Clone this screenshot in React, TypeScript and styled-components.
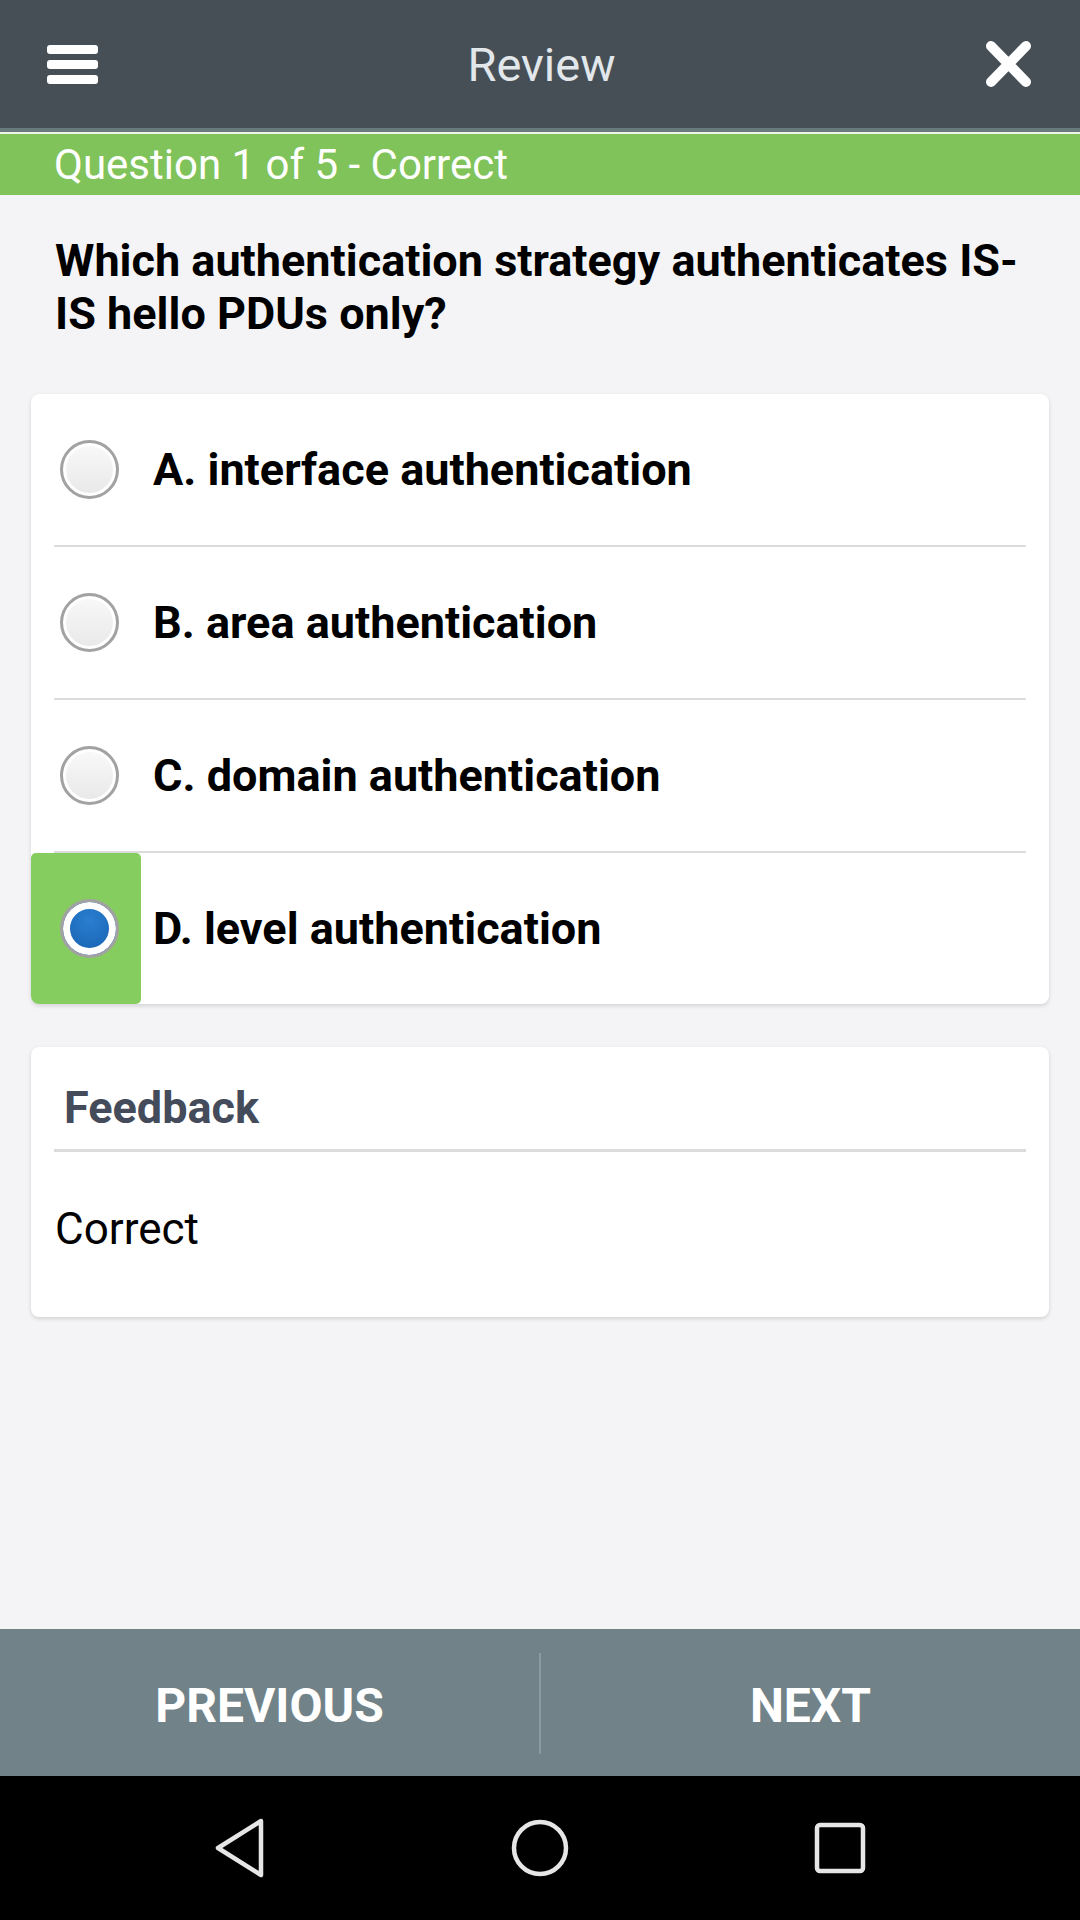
import React from "react";
import styled, { createGlobalStyle } from "styled-components";

const GlobalStyle = createGlobalStyle`
  html, body { margin: 0; padding: 0; }
  body {
    font-family: Roboto, "Noto Sans", "Liberation Sans", sans-serif;
    background: #f4f4f6;
    -webkit-font-smoothing: antialiased;
  }
  * { box-sizing: border-box; }
`;

const Page = styled.div`
  width: 1080px;
  min-height: 1920px;
  display: flex;
  flex-direction: column;
  background: #f4f4f6;
`;

const Header = styled.header`
  height: 132px;
  background: #474f56;
  border-bottom: 4px solid #677b7c;
  display: flex;
  align-items: center;
  justify-content: space-between;
  padding: 0 48px 0 47px;
`;

const Title = styled.h1`
  margin: 0;
  font-size: 47px;
  font-weight: 400;
  color: #e1e7ea;
  line-height: 1;
`;

const IconButton = styled.button`
  background: none;
  border: 0;
  padding: 0;
  display: flex;
  align-items: center;
  justify-content: center;
`;

const StatusBar = styled.div`
  height: 63px;
  background: #80c35a;
  border-top: 2px solid #eef5e8;
  display: flex;
  align-items: center;
  padding-left: 54px;
  font-size: 42px;
  font-weight: 400;
  color: #ffffff;
`;

const Content = styled.main`
  flex: 1;
  padding: 0 31px;
`;

const Question = styled.p`
  margin: 39px 24px 54px;
  font-size: 45px;
  line-height: 53px;
  font-weight: 700;
  color: #000;
`;

const Card = styled.section<{ $gap?: number }>`
  background: #fff;
  border-radius: 8px;
  box-shadow: 0 2px 4px rgba(0, 0, 0, 0.13), 0 0 1px rgba(0, 0, 0, 0.06);
  overflow: hidden;
  margin-top: ${(p) => p.$gap ?? 0}px;
`;

const OptionRow = styled.div`
  height: 151px;
  display: flex;
  align-items: stretch;
`;

const RadioCell = styled.div<{ $selected?: boolean }>`
  width: 110px;
  display: flex;
  align-items: center;
  justify-content: center;
  padding-left: 6px;
  background: ${(p) => (p.$selected ? "#86cd5f" : "transparent")};
  border-radius: 5px;
`;

const Radio = styled.span<{ $checked?: boolean }>`
  width: 59px;
  height: 59px;
  border-radius: 50%;
  border: 3px solid #a2a2a2;
  background: ${(p) =>
    p.$checked
      ? "radial-gradient(circle at 50% 35%, #2a7fd0 0%, #1a66b6 70%)"
      : "linear-gradient(#f9f9f9, #e8e8e8)"};
  box-shadow: inset 0 0 0 ${(p) => (p.$checked ? 7 : 3)}px #ffffff;
`;

const OptionText = styled.span`
  display: flex;
  align-items: center;
  margin-left: 12px;
  font-size: 45px;
  font-weight: 700;
  color: #000;
`;

const Separator = styled.div<{ $thick?: number }>`
  height: ${(p) => p.$thick ?? 2}px;
  margin: 0 23px;
  background: #dcdcdc;
`;

const FeedbackTitle = styled.h2`
  margin: 0;
  padding: 35px 0 15px 33px;
  font-size: 45px;
  line-height: 52px;
  font-weight: 700;
  color: #444b5b;
`;

const FeedbackBody = styled.p`
  margin: 0;
  padding: 51px 24px 62px;
  font-size: 44px;
  line-height: 52px;
  font-weight: 400;
  color: #000;
`;

const BottomBar = styled.nav`
  height: 147px;
  background: #718389;
  display: flex;
  align-items: stretch;
`;

const NavButton = styled.button`
  flex: 1;
  background: none;
  border: 0;
  padding: 6px 0 0;
  color: #fff;
  font-family: Roboto, "Liberation Sans", sans-serif;
  font-size: 48px;
  font-weight: 700;
  display: flex;
  align-items: center;
  justify-content: center;
`;

const VDivider = styled.div`
  width: 2px;
  margin: 24px 0 22px;
  background: #8a9ca1;
`;

const SystemNav = styled.div`
  height: 144px;
  background: #000;
  display: grid;
  grid-template-columns: repeat(3, 300px);
  justify-content: center;
  align-items: center;
  justify-items: center;
`;

const options = [
  "A. interface authentication",
  "B. area authentication",
  "C. domain authentication",
  "D. level authentication",
];
const selected = 3;

const MenuIcon = () => (
  <svg width="51" height="39" viewBox="0 0 51 39">
    <rect x="0" y="0" width="51" height="9" rx="3" fill="#fff" />
    <rect x="0" y="15" width="51" height="9" rx="3" fill="#fff" />
    <rect x="0" y="30" width="51" height="9" rx="3" fill="#fff" />
  </svg>
);

const CloseIcon = () => (
  <svg width="47" height="48" viewBox="0 0 47 48">
    <path d="M6 6 L41 42 M41 6 L6 42" stroke="#fff" strokeWidth="10" strokeLinecap="round" />
  </svg>
);

const NavIcon = "#e6e6e6";

export default function App() {
  return (
    <>
      <GlobalStyle />
      <Page>
        <Header>
          <IconButton aria-label="menu">
            <MenuIcon />
          </IconButton>
          <Title>Review</Title>
          <IconButton aria-label="close">
            <CloseIcon />
          </IconButton>
        </Header>
        <StatusBar>Question 1 of 5 - Correct</StatusBar>
        <Content>
          <Question>Which authentication strategy authenticates IS-IS hello PDUs only?</Question>
          <Card>
            {options.map((o, i) => (
              <React.Fragment key={o}>
                {i > 0 && <Separator />}
                <OptionRow>
                  <RadioCell $selected={i === selected}>
                    <Radio $checked={i === selected} />
                  </RadioCell>
                  <OptionText>{o}</OptionText>
                </OptionRow>
              </React.Fragment>
            ))}
          </Card>
          <Card $gap={43}>
            <FeedbackTitle>Feedback</FeedbackTitle>
            <Separator $thick={3} />
            <FeedbackBody>Correct</FeedbackBody>
          </Card>
        </Content>
        <BottomBar>
          <NavButton>PREVIOUS</NavButton>
          <VDivider />
          <NavButton>NEXT</NavButton>
        </BottomBar>
        <SystemNav>
          <svg width="50" height="60" viewBox="0 0 50 60">
            <path d="M46 3 L3 30 L46 57 Z" fill="none" stroke={NavIcon} strokeWidth="4.5" strokeLinejoin="round" />
          </svg>
          <svg width="60" height="60" viewBox="0 0 60 60">
            <circle cx="30" cy="30" r="26" fill="none" stroke={NavIcon} strokeWidth="4.5" />
          </svg>
          <svg width="52" height="52" viewBox="0 0 52 52">
            <rect x="3" y="3" width="46" height="46" rx="3" fill="none" stroke={NavIcon} strokeWidth="4.5" />
          </svg>
        </SystemNav>
      </Page>
    </>
  );
}
